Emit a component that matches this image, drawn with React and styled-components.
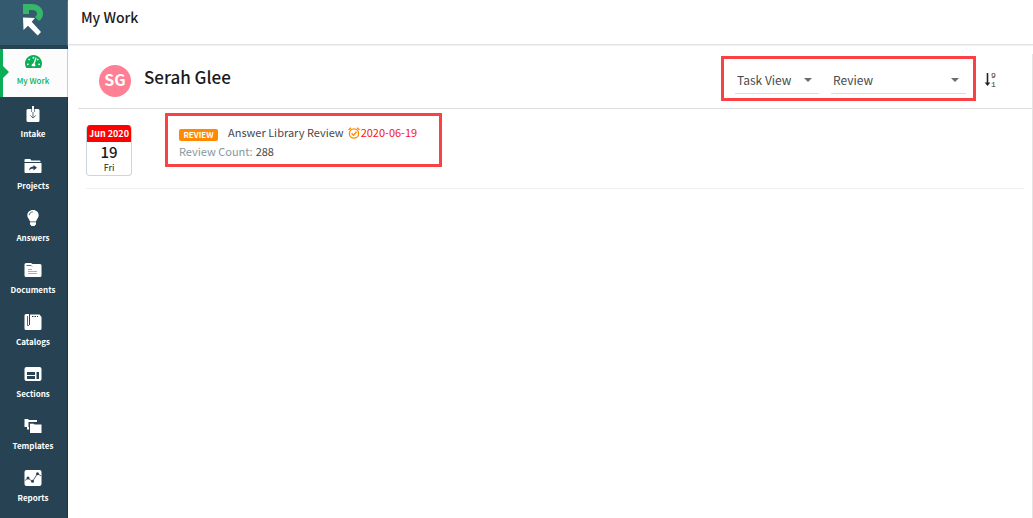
/* External dependencies */
import React from 'react';
import styled, { createGlobalStyle } from 'styled-components';
import { FaTachometerAlt } from 'react-icons/fa';

const green = '#0aae57';
const navy = '#274353';
const highlight = '#fa4245';

const GlobalStyle = createGlobalStyle`
    * {
        box-sizing: border-box;
    }

    body {
        margin: 0;
        background: #fff;
        color: #1a1a1a;
        font-family: "Noto Sans CJK SC", "Noto Sans", sans-serif;
        font-size: 12px;
    }
`;

const Page = styled.div`
    display: flex;
    min-height: 100vh;
`;

/**
 * Left hand navigation.
 */
const Sidebar = styled.nav`
    flex: 0 0 68px;
    background: ${navy};
    box-shadow: inset -1px 0 #1d3644;
`;

const LogoLink = styled.a`
    display: flex;
    justify-content: center;
    height: 45px;
    margin-bottom: 4px;
    padding: 3px 2px 0 0;
    background: #345a70;
`;

const NavList = styled.ul`
    display: flex;
    flex-direction: column;
    gap: 4px;
    margin: 0;
    padding: 0;
    list-style: none;
`;

const NavLink = styled.a`
    position: relative;
    display: flex;
    flex-direction: column;
    align-items: center;
    height: 48px;
    padding: 4px 1px 0 0;
    border-right: 1px solid ${({ $active }) => ($active ? '#ccc' : 'transparent')};
    background: ${({ $active }) => ($active ? '#fcfcfc' : 'transparent')};
    color: ${({ $active }) => ($active ? green : '#fff')};
    font-size: 8px;
    font-weight: ${({ $active }) => ($active ? 500 : 700)};
    line-height: 16px;
    text-decoration: none;

    svg {
        display: block;
        margin-bottom: 3px;
    }
`;

const ActiveMarker = styled.svg`
    position: absolute;
    top: 0;
    left: 0;
`;

const Main = styled.main`
    display: flex;
    flex: 1;
    flex-direction: column;
    min-width: 0;
`;

const PageHeader = styled.header`
    height: 45px;
    padding: 5px 13px;
    border-bottom: 1px solid #e2e2e2;
    box-shadow: 0 1px 1px #f4f4f4;
`;

const PageTitle = styled.h1`
    margin: 0;
    font-size: 14px;
    font-weight: 500;
    line-height: 24px;
`;

const Panel = styled.section`
    flex: 1;
    margin: 9px 0 0 10px;
    border-right: 1px solid #e4e4e4;
`;

/**
 * Row with the user and the list filters.
 */
const ProfileBar = styled.div`
    display: flex;
    align-items: flex-start;
    height: 55px;
    padding: 2px 35px 0 21px;
    border-bottom: 1px solid #dedede;
`;

const Avatar = styled.div`
    width: 32px;
    height: 32px;
    margin: 9px 13px 0 0;
    border-radius: 50%;
    background: #ff8095;
    color: #fff;
    font-size: 16px;
    font-weight: 700;
    line-height: 28px;
    text-align: center;
`;

const UserName = styled.h2`
    flex: 1;
    margin: 0;
    font-size: 17px;
    font-weight: 500;
    line-height: 42px;
`;

const Filters = styled.div`
    display: flex;
    gap: 12px;
    height: 45px;
    padding: 8px 7px 0 11px;
    border: 3px solid ${highlight};
`;

const SelectField = styled.label`
    position: relative;
    width: ${({ $width }) => $width}px;

    svg {
        position: absolute;
        top: 11px;
        right: 7px;
        pointer-events: none;
    }
`;

const Select = styled.select`
    width: 100%;
    height: 27px;
    padding: 0 2px 2px;
    border: 0;
    border-bottom: 1px solid #dcdcdc;
    border-radius: 0;
    outline: 0;
    appearance: none;
    background: transparent;
    color: #4a4a4a;
    font: inherit;
`;

const SortButton = styled.button`
    display: flex;
    margin: 15px 0 0 8px;
    padding: 0;
    border: 0;
    background: none;
`;

const TaskList = styled.ul`
    margin: 0 8px;
    padding: 0;
    list-style: none;
`;

const TaskItem = styled.li`
    display: flex;
    align-items: flex-start;
    gap: 33px;
    padding: 4px 0 12px;
    border-bottom: 1px solid #eee;
`;

/**
 * Calendar leaf showing when the task is due.
 */
const DateCard = styled.time`
    width: 46px;
    height: 51px;
    margin-top: 12px;
    overflow: hidden;
    border: 1px solid #c9d8de;
    border-top: 0;
    border-radius: 4px;
    text-align: center;
`;

const Month = styled.div`
    margin: 0 -1px;
    background: #f00;
    color: #fff;
    font-size: 9px;
    font-weight: 700;
    line-height: 17px;
`;

const Day = styled.div`
    font-size: 15px;
    font-weight: 500;
    line-height: 20px;
`;

const Weekday = styled.div`
    font-size: 9px;
    line-height: 12px;
`;

const TaskSummary = styled.div`
    width: 277px;
    height: 54px;
    padding: 8px;
    padding-left: 11px;
    border: 3px solid ${highlight};
    font-size: 11px;
    line-height: 17px;
    white-space: nowrap;
`;

const TaskLine = styled.div`
    display: flex;
    align-items: flex-start;
    height: 19px;
    color: #484848;
`;

const Badge = styled.span`
    width: 39px;
    height: 12px;
    margin: 5px 10px 0 0;
    border-radius: 2px;
    background: #ff8a00;
    color: #fff;
    font-size: 8px;
    font-weight: 700;
    line-height: 11px;
    text-align: center;
`;

const DueDate = styled.span`
    display: flex;
    margin-left: 4px;
    color: #f5161c;

    svg {
        margin: 3px 1px 0 0;
    }
`;

const CountLabel = styled.span`
    margin-right: 3px;
    color: #84989f;
`;

const Logo = () => (
    <svg width="22" height="34" viewBox="0 0 22 34" aria-hidden="true">
        <path d="M1 1h9c6 0 11 4 11 9.500c0 3-1.500 5.500-4 7.500l-4-4c1.300-.9 2-2 2-3.500C15 8.300 13 7 10 7H7v4H1z" fill="#35b768" />
        <path d="M1 14.500l12 .5-3.300 3.700 9.300 10.300-3.300 3.500L6 22.700 1.500 27z" fill="#fff" />
    </svg>
);

const Glyph = ({ children }) => (
    <svg width="18" height="18" viewBox="0 0 18 18" aria-hidden="true">{children}</svg>
);

const IntakeIcon = () => (
    <Glyph>
        <path d="M3.500 4H8V1h2v3h4.500l1 1v10.500q0 1.500-1.500 1.500H4q-1.500 0-1.500-1.500V5z" fill="#fff" />
        <path d="M7.500 4v3M10.500 4v3" stroke={navy} strokeWidth=".6" />
        <path d="M9 7v6M6.300 10.500L9 13l2.700-2.500" stroke="#5b707c" fill="none" />
    </Glyph>
);

const ProjectsIcon = () => (
    <Glyph>
        <path d="M1.500 2h4.800l1 1.500h8.200q1 0 1 1V5H.5V3q0-1 1-1zM.5 6h17v9q0 1-1 1h-15q-1 0-1-1z" fill="#fff" />
        <path d="M5 13.500c.3-3 2-4 4.500-4V8l3.500 2.700-3.500 2.700v-1.600c-2 0-3.300.4-4.500 1.700z" fill={navy} />
    </Glyph>
);

const AnswersIcon = () => (
    <Glyph>
        <path d="M9 1C5.600 1 3.300 3.300 3.300 6.300c0 2.500 1.900 3.700 2.700 6.200h6c.8-2.500 2.700-3.700 2.700-6.200C14.700 3.300 12.400 1 9 1zM6 13.300h6v1.900L10.500 17h-3L6 15.200z" fill="#fff" />
        <path d="M5.200 6.200C5.300 4.300 6.700 3 8.800 2.900" stroke={navy} strokeWidth=".8" fill="none" />
    </Glyph>
);

const DocumentsIcon = () => (
    <Glyph>
        <path d="M2 2h5l1.500 1H16q1.500 0 1.500 1.500v10Q17.500 16 16 16H2Q.5 16 .5 14.500v-11Q.5 2 2 2z" fill="#fff" />
        <path d="M2.500 4.500H7l1 1" stroke={navy} strokeWidth=".8" fill="none" />
        <path d="M4 8.500h4M4 10.500h9M4 12.500h9" stroke="#a3b0b7" />
    </Glyph>
);

const CatalogsIcon = () => (
    <Glyph>
        <path d="M2 1h3v11h1V1.500h9.500l2 2.500v11.500q0 1.500-1.500 1.500H2Q.5 17 .5 15.500v-13Q.5 1 2 1z" fill="#fff" />
        <path d="M3.500 3v9.500h1.500" stroke={navy} fill="none" strokeWidth=".8" />
        <path d="M8 3.500h6" stroke={navy} strokeDasharray="1.500 1" />
    </Glyph>
);

const SectionsIcon = () => (
    <Glyph>
        <rect x=".5" y="2" width="17" height="14" rx="2" fill="#fff" />
        <path d="M3 7h8v3H3zM3 11h8v3H3zM12.500 7H15v7h-2.500z" fill={navy} />
    </Glyph>
);

const TemplatesIcon = () => (
    <Glyph>
        <path d="M.5 2H4l1 1h8v2H4.500v5H.5z" fill="#fff" />
        <path d="M3 10h2v2.500H3z" fill="#fff" />
        <path d="M6 6.500h3.500l1 1h7V16H6z" fill="#fff" />
        <path d="M5.500 12.500V6H13" stroke={navy} strokeWidth=".8" fill="none" />
    </Glyph>
);

const ReportsIcon = () => (
    <Glyph>
        <rect x=".5" y="1" width="17" height="16" rx="2" fill="#fff" />
        <path d="M1 11.500L4 9l4.500 3.500L13.500 4.500 17 7" stroke={navy} strokeWidth=".8" fill="none" />
        <g fill={navy}>
            <circle cx="4" cy="9" r="1.500" />
            <circle cx="8.500" cy="12.300" r="1.500" />
            <circle cx="13.500" cy="4.700" r="1.500" />
        </g>
    </Glyph>
);

const GaugeIcon = () => <FaTachometerAlt size={17} aria-hidden="true" />;

const CaretIcon = () => (
    <svg width="8" height="4" viewBox="0 0 8 4" aria-hidden="true">
        <path d="M0 0h8L4 4z" fill="#6c6c6c" />
    </svg>
);

const AlarmIcon = () => (
    <svg width="12" height="12" viewBox="0 0 12 12" fill="none" stroke="#ff8a00" aria-hidden="true">
        <circle cx="6" cy="6.500" r="4.600" strokeWidth="1.300" />
        <path d="M.5 3L3 .8M11.500 3L9 .8" strokeWidth="1.400" />
        <path d="M3.600 6.300l1.900 2 3.100-3.500" strokeWidth="1.300" />
    </svg>
);

const SortIcon = () => (
    <svg width="13" height="18" viewBox="0 0 13 18" aria-hidden="true">
        <path d="M3.500 2v11" stroke="#222" strokeWidth="1.600" />
        <path d="M.7 11.500h5.600L3.500 15z" fill="#222" />
        <g fontFamily="Liberation Mono, monospace" fontSize="8" fill="#333">
            <text x="7" y="7">9</text>
            <text x="7" y="16">1</text>
        </g>
    </svg>
);

const navItems = [
    { label: 'My Work', Icon: GaugeIcon, active: true },
    { label: 'Intake', Icon: IntakeIcon },
    { label: 'Projects', Icon: ProjectsIcon },
    { label: 'Answers', Icon: AnswersIcon },
    { label: 'Documents', Icon: DocumentsIcon },
    { label: 'Catalogs', Icon: CatalogsIcon },
    { label: 'Sections', Icon: SectionsIcon },
    { label: 'Templates', Icon: TemplatesIcon },
    { label: 'Reports', Icon: ReportsIcon },
];

/**
 * Underlined drop-down used in the filter bar.
 */
const FilterSelect = ({ label, option, width }) => (
    <SelectField $width={width}>
        <Select aria-label={label} defaultValue={option}>
            <option>{option}</option>
        </Select>
        <CaretIcon />
    </SelectField>
);

export default function App() {
    return (
        <Page>
            <GlobalStyle />
            <Sidebar>
                <LogoLink href="#" aria-label="Home">
                    <Logo />
                </LogoLink>
                <NavList>
                    {navItems.map(({ label, Icon, active }) => (
                        <li key={label}>
                            <NavLink href="#" $active={active}>
                                {active && (
                                    <ActiveMarker width="9" height="48" viewBox="0 0 9 48" aria-hidden="true">
                                        <path d="M0 0h3v17l6 6-6 6v19H0z" fill={green} />
                                    </ActiveMarker>
                                )}
                                <Icon />
                                {label}
                            </NavLink>
                        </li>
                    ))}
                </NavList>
            </Sidebar>
            <Main>
                <PageHeader>
                    <PageTitle>My Work</PageTitle>
                </PageHeader>
                <Panel>
                    <ProfileBar>
                        <Avatar>SG</Avatar>
                        <UserName>Serah Glee</UserName>
                        <Filters>
                            <FilterSelect label="View" option="Task View" width={84} />
                            <FilterSelect label="Task type" option="Review" width={135} />
                        </Filters>
                        <SortButton type="button" aria-label="Sort descending">
                            <SortIcon />
                        </SortButton>
                    </ProfileBar>
                    <TaskList>
                        <TaskItem>
                            <DateCard dateTime="2020-06-19">
                                <Month>Jun 2020</Month>
                                <Day>19</Day>
                                <Weekday>Fri</Weekday>
                            </DateCard>
                            <TaskSummary>
                                <TaskLine>
                                    <Badge>REVIEW</Badge>
                                    Answer Library Review
                                    <DueDate>
                                        <AlarmIcon />
                                        2020-06-19
                                    </DueDate>
                                </TaskLine>
                                <TaskLine>
                                    <CountLabel>Review Count:</CountLabel>
                                    288
                                </TaskLine>
                            </TaskSummary>
                        </TaskItem>
                    </TaskList>
                </Panel>
            </Main>
        </Page>
    );
}
